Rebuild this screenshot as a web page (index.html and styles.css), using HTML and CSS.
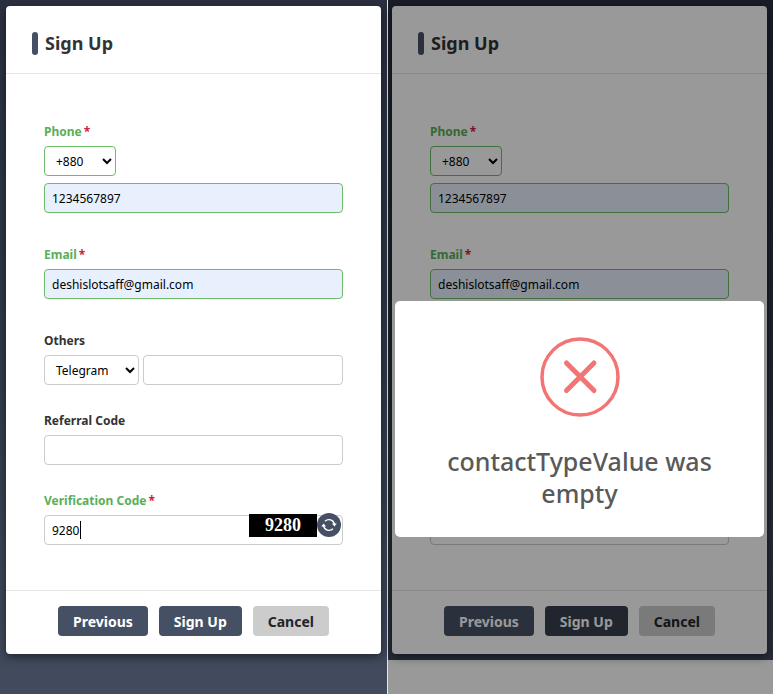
FILE: index.html
```html
<!DOCTYPE html>
<html lang="en">
<head>
    <meta charset="UTF-8">
    <meta name="viewport" content="width=device-width, initial-scale=1">
    <title>Sign Up</title>
    <link rel="stylesheet" href="styles.css">
</head>
<body>
    <main class="screens">
        <section class="screen">
            <form class="card">
                <header class="card-header">
                    <h1 class="card-title">Sign Up</h1>
                </header>
                <div class="card-body">
                    <div class="form-group valid">
                        <label for="phone">Phone<span class="required">*</span></label>
                        <select class="phone-code" aria-label="Country code">
                            <option>+880</option>
                        </select>
                        <input type="tel" id="phone" class="form-input filled" value="1234567897">
                    </div>
                    <div class="form-group valid">
                        <label for="email">Email<span class="required">*</span></label>
                        <input type="email" id="email" class="form-input filled" value="deshislotsaff@gmail.com">
                    </div>
                    <div class="form-group">
                        <label for="contact">Others</label>
                        <div class="input-row">
                            <select class="contact-type" aria-label="Contact type">
                                <option>Telegram</option>
                            </select>
                            <input type="text" id="contact" class="form-input">
                        </div>
                    </div>
                    <div class="form-group">
                        <label for="referral">Referral Code</label>
                        <input type="text" id="referral" class="form-input">
                    </div>
                    <div class="form-group checked">
                        <label for="code">Verification Code<span class="required">*</span></label>
                        <div class="code-field">
                            <input type="text" id="code" class="form-input" value="9280">
                            <span class="caret"></span>
                            <div class="captcha">
                                <span class="captcha-code">9280</span>
                                <button type="button" class="refresh" aria-label="Refresh code">
                                    <svg viewBox="0 0 24 24" width="24" height="24">
                                        <path d="M8 8.2A5.6 5.6 0 0 1 17.4 11.4M16 15.8A5.6 5.6 0 0 1 6.6 12.6" fill="none" stroke="#fff" stroke-width="1.4"/>
                                        <path d="M15 10.6h4.8l-2.4 3zM4.2 13.4H9l-2.4-3z" fill="#fff"/>
                                    </svg>
                                </button>
                            </div>
                        </div>
                    </div>
                </div>
                <footer class="card-footer">
                    <button type="button" class="btn">Previous</button>
                    <button type="button" class="btn">Sign Up</button>
                    <button type="button" class="btn btn-cancel">Cancel</button>
                </footer>
            </form>
        </section>

        <section class="screen screen-error">
            <div class="backdrop-area">
                <form class="card">
                    <header class="card-header">
                        <h2 class="card-title">Sign Up</h2>
                    </header>
                    <div class="card-body">
                        <div class="form-group valid">
                            <label for="phone2">Phone<span class="required">*</span></label>
                            <select class="phone-code" aria-label="Country code">
                                <option>+880</option>
                            </select>
                            <input type="tel" id="phone2" class="form-input filled" value="1234567897">
                        </div>
                        <div class="form-group valid">
                            <label for="email2">Email<span class="required">*</span></label>
                            <input type="email" id="email2" class="form-input filled" value="deshislotsaff@gmail.com">
                        </div>
                        <div class="form-group">
                            <label for="contact2">Others</label>
                            <div class="input-row">
                                <select class="contact-type" aria-label="Contact type">
                                    <option>Telegram</option>
                                </select>
                                <input type="text" id="contact2" class="form-input">
                            </div>
                        </div>
                        <div class="form-group">
                            <label for="referral2">Referral Code</label>
                            <input type="text" id="referral2" class="form-input">
                        </div>
                        <div class="form-group checked">
                            <label for="code2">Verification Code<span class="required">*</span></label>
                            <input type="text" id="code2" class="form-input" value="9280">
                        </div>
                    </div>
                    <footer class="card-footer">
                        <button type="button" class="btn">Previous</button>
                        <button type="button" class="btn btn-active">Sign Up</button>
                        <button type="button" class="btn btn-cancel">Cancel</button>
                    </footer>
                </form>
            </div>
            <div class="overlay">
                <div class="alert" role="alertdialog" aria-labelledby="alert-title">
                    <svg class="alert-icon" viewBox="0 0 80 80" width="80" height="80">
                        <circle cx="40" cy="40" r="38" fill="none" stroke="#f27474" stroke-width="3.5"/>
                        <path d="M26.5 26L54 53.5M54 26L26.5 53.5" stroke="#f27474" stroke-width="5" stroke-linecap="round"/>
                    </svg>
                    <h2 id="alert-title" class="alert-title">contactTypeValue was empty</h2>
                </div>
            </div>
        </section>
    </main>
</body>
</html>
```

FILE: styles.css
```css
* {
    box-sizing: border-box;
}

body {
    margin: 0;
    font-family: "Segoe UI", "Noto Sans", "Open Sans", sans-serif;
    font-size: 12px;
    color: #333;
}

.screens {
    display: grid;
    grid-template-columns: 388fr 385fr;
    min-height: 100vh;
}

.screen {
    position: relative;
    padding: 6px;
    background: linear-gradient(#2b3041, #2f3a4a 50%, #434b5f);
    border-right: 1px solid #e4e6ea;
}

.screen-error {
    padding: 0;
    background: #fff;
    border-right: none;
}

.backdrop-area {
    padding: 6px 6px 6px 4px;
    background: linear-gradient(#2b3041, #2f3a4a 50%, #434b5f);
}

.card {
    background-color: #fff;
    border-radius: 4px;
    box-shadow: 0 3px 10px rgba(0, 0, 0, 0.5);
}

.card-header {
    padding: 25px 26px 18px;
    border-bottom: 1px solid #e5e5e5;
}

.card-title {
    display: flex;
    align-items: center;
    gap: 7px;
    margin: 0;
    font-size: 18px;
    line-height: 24px;
}

.card-title::before {
    content: "";
    width: 6px;
    height: 23px;
    border-radius: 3px;
    background-color: #465065;
}

.card-body {
    display: flex;
    flex-direction: column;
    gap: 25px;
    padding: 47px 38px 45px;
}

.form-group label {
    display: block;
    margin-bottom: 3px;
    line-height: 22px;
    font-weight: bold;
}

.form-group.valid {
    margin-bottom: 6px;
}

.valid label,
.checked label {
    color: #5cae58;
}

.form-group .required {
    margin-left: 2px;
    color: #d0213c;
}

.form-input,
select {
    display: block;
    width: 100%;
    height: 30px;
    padding: 0 7px;
    border: 1px solid #ccc;
    border-radius: 4px;
    background-color: #fff;
    color: #000;
    font-family: inherit;
    font-size: 12px;
}

.valid .form-input,
.valid select {
    border-color: #6dbb69;
}

.form-input.filled {
    background-color: #e8f0fe;
}

select.phone-code {
    width: 72px;
    margin-bottom: 7px;
}

select.contact-type {
    flex: none;
    width: 95px;
}

.input-row {
    display: flex;
    gap: 4px;
}

.code-field {
    position: relative;
}

.caret {
    position: absolute;
    top: 6px;
    left: 36px;
    width: 1px;
    height: 18px;
    background-color: #000;
}

.captcha {
    position: absolute;
    top: -2px;
    right: 2px;
    display: flex;
    align-items: center;
}

.captcha-code {
    width: 68px;
    background-color: #000;
    color: #fff;
    font-family: "Liberation Serif", serif;
    font-size: 18px;
    font-weight: bold;
    line-height: 23px;
    text-align: center;
}

.refresh {
    display: flex;
    width: 24px;
    height: 24px;
    padding: 0;
    border: none;
    border-radius: 50%;
    background-color: #465065;
    cursor: pointer;
}

.card-footer {
    display: flex;
    justify-content: center;
    gap: 11px;
    padding: 15px 15px 18px;
    border-top: 1px solid #e5e5e5;
}

.btn {
    height: 30px;
    padding: 0 15px;
    border: none;
    border-radius: 4px;
    background-color: #465065;
    color: #fff;
    font-family: inherit;
    font-size: 14px;
    font-weight: bold;
    cursor: pointer;
}

.btn-active {
    background-color: #363e4e;
}

.btn-cancel {
    background-color: #ccc;
    color: #212529;
}

.overlay {
    position: absolute;
    inset: 0;
    display: flex;
    align-items: flex-end;
    padding: 0 9px 157px 7px;
    background-color: rgba(0, 0, 0, 0.4);
}

.alert {
    flex: 1;
    padding: 36px 20px 28px;
    border-radius: 5px;
    background-color: #fff;
    text-align: center;
}

.alert-icon {
    display: block;
    margin: 0 auto 28px;
}

.alert-title {
    margin: 0;
    color: #595959;
    font-size: 25px;
    font-weight: 500;
    line-height: 32px;
}
```
